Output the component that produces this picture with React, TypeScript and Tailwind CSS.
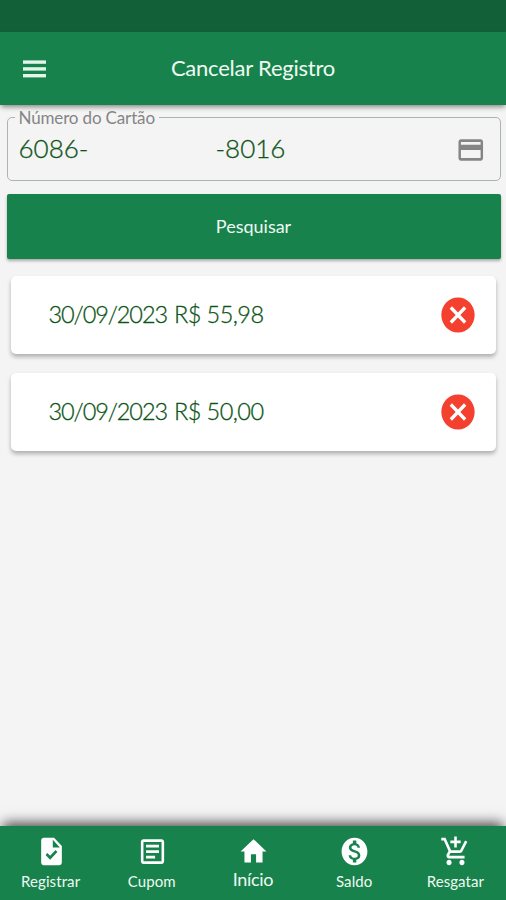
import React from "react";
import {
  MdAddShoppingCart,
  MdCancel,
  MdHome,
  MdMonetizationOn,
  MdOutlineArticle,
  MdOutlineCreditCard,
  MdTask,
} from "react-icons/md";

const records = [
  { date: "30/09/2023", amount: "R$ 55,98" },
  { date: "30/09/2023", amount: "R$ 50,00" },
];

const tabs = [
  { label: "Registrar", icon: MdTask },
  { label: "Cupom", icon: MdOutlineArticle },
  { label: "Início", icon: MdHome, active: true },
  { label: "Saldo", icon: MdMonetizationOn },
  { label: "Resgatar", icon: MdAddShoppingCart },
];

const MenuIcon = () => (
  <svg viewBox="0 0 23 18" className="w-[23px] h-[18px]" fill="#e4f6ea">
    <rect y="0.4" width="23" height="3.4" />
    <rect y="7.2" width="23" height="3.4" />
    <rect y="14" width="23" height="3.4" />
  </svg>
);

const Header = () => (
  <header className="shrink-0">
    <div className="h-8 bg-[#126038]"></div>
    <div className="h-[72.5px] bg-[#18824d] grid grid-cols-[72px_1fr_72px] items-center shadow-[0_3px_5px_-1px_rgba(0,0,0,0.45)]">
      <button className="pl-[23px] pt-px">
        <MenuIcon />
      </button>
      <h1 className="text-center text-[22px] leading-7 tracking-[-0.22px] text-[#eefaf1] whitespace-nowrap">Cancelar Registro</h1>
    </div>
  </header>
);

const CardField = () => (
  <fieldset className="h-[72px] border border-[#abb5b0] rounded-[5px] px-[7px] flex">
    <legend className="h-[18px] px-[4px] text-[17px] leading-[17px] tracking-[-0.15px] text-[#858585] whitespace-nowrap">Número do Cartão</legend>
    <div className="flex w-full items-start justify-between pl-[4px] pr-[7px]">
      <div className="flex pt-[5px] text-[26px] leading-8 text-[#0f5519] font-light [-webkit-text-stroke:0.3px_#0f5519]">
        <span className="w-[197px]">6086-</span>
        <span>-8016</span>
      </div>
      <MdOutlineCreditCard preserveAspectRatio="none" className="mt-[7px] w-[29.5px] h-8 text-[#858585]" />
    </div>
  </fieldset>
);

const RecordCard = ({ date, amount }: { date: string; amount: string }) => (
  <div className="h-[78px] bg-white rounded-[5px] pl-[37.5px] pr-[18px] flex items-center justify-between shadow-[0_3px_4px_rgba(0,0,0,0.28)]">
    <div className="pb-[2px] flex gap-[7px] text-[23.5px] leading-8 font-light text-[#0c5517] [-webkit-text-stroke:0.3px_#0c5517] whitespace-nowrap">
      <span className="tracking-[-1.1px]">{date}</span>
      <span className="tracking-[-0.55px]">{amount}</span>
    </div>
    <button>
      <MdCancel preserveAspectRatio="none" className="w-10 h-[42px] text-[#f3402f]" />
    </button>
  </div>
);

const BottomNav = () => (
  <nav className="h-[74px] shrink-0 bg-[#18824d] grid grid-cols-5 text-white shadow-[0_-6px_12px_-3px_rgba(0,0,0,0.72)]">
    {tabs.map(({ label, icon: Icon, active }) => (
      <button key={label} className="flex flex-col items-center pt-[9px]">
        <Icon preserveAspectRatio="none" className="ml-px w-[31px] h-[33px]" />
        <span className={active ? "text-[18px] leading-[22px] tracking-[-0.3px] text-[#eefaf1]" : "pt-[2px] text-[15px] leading-[22px] tracking-[0.1px] text-[#eefaf1]"}>{label}</span>
      </button>
    ))}
  </nav>
);

const App = () => (
  <div className="w-[506px] h-[900px] bg-[#f4f4f4] flex flex-col overflow-hidden font-['Lato',sans-serif]">
    <Header />
    <main className="flex-1 pl-[6.5px] pr-[5.5px] pt-[4px]">
      <CardField />
      <button className="mt-[13px] w-full h-[65px] bg-[#18824d] rounded-[2px] text-[18px] text-[#eefaf1] shadow-[0_2px_3px_rgba(0,0,0,0.3)]">Pesquisar</button>
      <div className="mt-[17px] px-[4.5px] flex flex-col gap-[19px]">
        {records.map((record, i) => (
          <RecordCard key={i} {...record} />
        ))}
      </div>
    </main>
    <BottomNav />
  </div>
);

export default App;
